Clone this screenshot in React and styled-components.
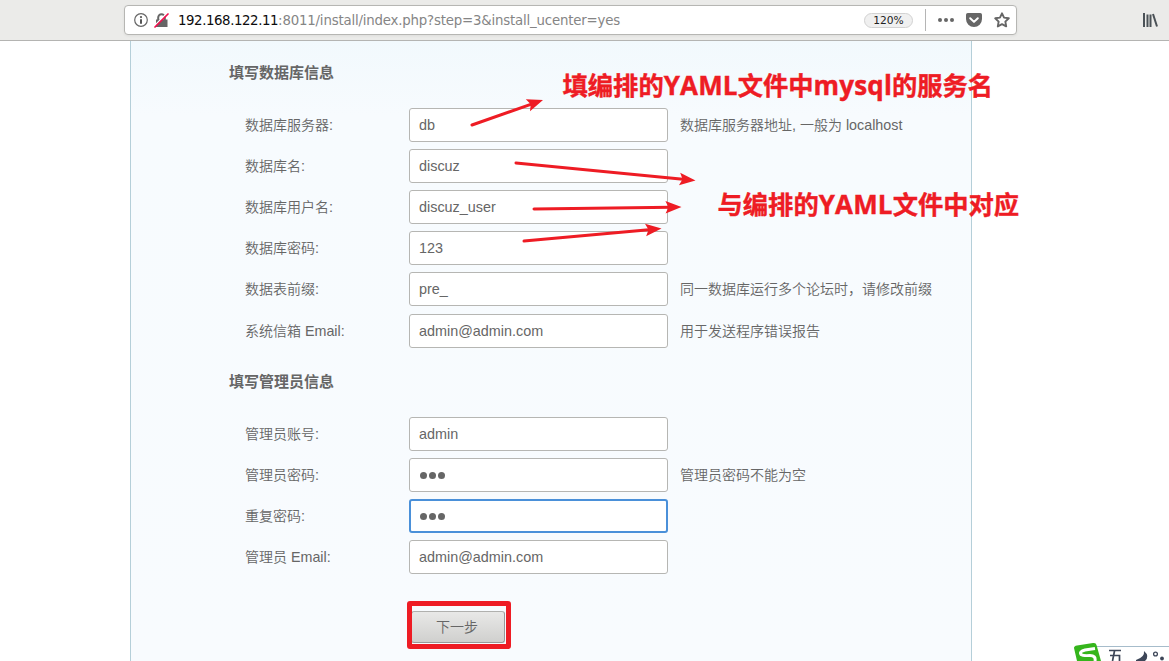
import React from "react";
import styled, { createGlobalStyle } from "styled-components";

const GlobalStyle = createGlobalStyle`
  * { box-sizing: border-box; }
  body {
    margin: 0;
    background: #fff;
    overflow: hidden;
    font-family: "Liberation Sans", "Noto Sans CJK SC", sans-serif;
    color: #666;
  }
`;

const Page = styled.div`
  position: relative;
  width: 1169px;
  height: 661px;
  overflow: hidden;
  display: flex;
  flex-direction: column;
`;

const Toolbar = styled.header`
  flex: none;
  height: 41px;
  padding: 5px 11px 0 124px;
  display: flex;
  align-items: flex-start;
  justify-content: space-between;
  background: #ebebe9;
  border-bottom: 1px solid #b4b4b2;
`;

const AddressBar = styled.div`
  width: 893px;
  height: 30px;
  padding: 0 6px 0 9px;
  display: flex;
  align-items: center;
  background: #fff;
  border: 1px solid #b6b6b3;
  border-radius: 4px;
  box-shadow: 0 1px 3px rgba(0, 0, 0, 0.06);
`;

const Url = styled.div`
  flex: 1;
  margin-left: 9px;
  padding-top: 1px;
  font-family: "DejaVu Sans", sans-serif;
  font-size: 13.33px;
  letter-spacing: -0.19px;
  line-height: 20px;
  white-space: nowrap;
  color: #858585;
`;

const Host = styled.span`
  color: #0c0c0d;
  letter-spacing: -0.42px;
`;

const Zoom = styled.div`
  width: 49px;
  height: 15px;
  border: 1px solid #d2d2d2;
  border-radius: 8px;
  background: #f0f0f0;
  color: #222;
  font-family: "DejaVu Sans", sans-serif;
  font-size: 10.7px;
  line-height: 13px;
  text-align: center;
`;

const Divider = styled.div`
  width: 1px;
  height: 22px;
  margin: 0 12px;
  background: #b5b5b5;
`;

const Actions = styled.div`
  display: flex;
  align-items: center;
  gap: 12px;
`;

const Icon = styled.svg`
  display: block;
  flex: none;
  margin-left: ${(p) => p.$left || 0}px;
  margin-top: ${(p) => p.$top || 0}px;
`;

const Panel = styled.main`
  flex: 1;
  width: 842px;
  margin-left: 130px;
  padding: 21px 0 0 98px;
  border: solid #b5cfd9;
  border-width: 0 1px;
  background: linear-gradient(#f2f9fd 0, #f7fbfe 75px, #f8fbfe 100%);
`;

const Heading = styled.h2`
  margin: 0;
  height: 22px;
  font-size: 15px;
  line-height: 22px;
  font-weight: 700;
`;

const Fields = styled.div`
  display: flex;
  flex-direction: column;
  gap: 7px;
  padding: 24px 0 0 16px;
  margin-bottom: ${(p) => p.$after}px;
`;

const Row = styled.div`
  display: flex;
  align-items: center;
  height: 34px;
  margin-top: ${(p) => p.$extra || 0}px;
  font-size: 14.3px;
  line-height: 20px;
  white-space: nowrap;
`;

const Cjk = styled.span`
  font-size: 14px;
  font-weight: 350;
`;

const Label = styled.label`
  width: 164px;
`;

const Input = styled.input`
  width: 259px;
  height: 34px;
  padding: 0 9px;
  border: 1px solid #b6b6b3;
  border-radius: 3px;
  outline: none;
  background: #fff;
  color: #666;
  font-family: "Liberation Sans", sans-serif;
  font-size: 14.4px;
`;

const Secret = styled.div`
  display: flex;
  align-items: center;
  gap: 2px;
  width: 259px;
  height: 34px;
  padding: 1px 0 0 ${(p) => (p.$focused ? 9 : 10)}px;
  border: ${(p) => (p.$focused ? "2px solid #4a90d9" : "1px solid #b6b6b3")};
  border-radius: 3px;
  background: #fff;
`;

const Dot = styled.i`
  width: 7px;
  height: 7px;
  border-radius: 50%;
  background: #666;
`;

const Hint = styled.span`
  margin-left: 12px;
`;

const Submit = styled.button`
  display: block;
  width: 94px;
  height: 32px;
  margin-left: 182px;
  padding: 0 2px 2px 0;
  border: 1px solid;
  border-color: #b0b0ae #999 #999 #b0b0ae;
  border-radius: 3px;
  background: linear-gradient(#e8e8e7, #d0d0ce);
  color: #666;
  font-family: "Noto Sans CJK SC", sans-serif;
  font-weight: 350;
  font-size: 14px;
  line-height: 28px;
`;

const Highlight = styled.div`
  position: absolute;
  left: 407px;
  top: 601px;
  width: 104px;
  height: 48px;
  border: 5px solid #ee1c24;
  border-radius: 3px;
`;

const Arrows = styled.svg`
  position: absolute;
  left: 460px;
  top: 90px;
`;

const Note = styled.div`
  position: absolute;
  left: ${(p) => p.$x}px;
  top: ${(p) => p.$y}px;
  color: #ee1c24;
  font-family: "Open Sans", "Noto Sans CJK SC", sans-serif;
  font-size: 25.3px;
  font-weight: 700;
  line-height: 36px;
  white-space: nowrap;
  -webkit-text-stroke: 0.4px #ee1c24;
`;

const Latin = styled.span`
  font-size: 26px;
  line-height: 1;
  letter-spacing: 0.15px;
`;

const ImeBar = styled.div`
  position: absolute;
  left: 1073px;
  top: 642px;
  width: 96px;
  height: 19px;
  overflow: hidden;
`;

const CJK_RUN = /([\u3000-\u9fff\uff00-\uffef]+)/;

function Mixed({ text }) {
  return text
    .split(CJK_RUN)
    .map((part, i) => (i % 2 ? <Cjk key={i}>{part}</Cjk> : part));
}

const database = [
  { label: "数据库服务器:", value: "db", hint: "数据库服务器地址, 一般为 localhost" },
  { label: "数据库名:", value: "discuz" },
  { label: "数据库用户名:", value: "discuz_user" },
  { label: "数据库密码:", value: "123" },
  { label: "数据表前缀:", value: "pre_", hint: "同一数据库运行多个论坛时，请修改前缀" },
  { label: "系统信箱 Email:", value: "admin@admin.com", hint: "用于发送程序错误报告", extra: 1 },
];

const admin = [
  { label: "管理员账号:", value: "admin" },
  { label: "管理员密码:", secret: true, hint: "管理员密码不能为空" },
  { label: "重复密码:", secret: true, focused: true },
  { label: "管理员 Email:", value: "admin@admin.com" },
];

function Field({ label, value, hint, secret, focused, extra }) {
  return (
    <Row $extra={extra}>
      <Label><Mixed text={label} /></Label>
      {secret ? (
        <Secret $focused={focused}><Dot /><Dot /><Dot /></Secret>
      ) : (
        <Input defaultValue={value} spellCheck={false} />
      )}
      {hint && <Hint><Mixed text={hint} /></Hint>}
    </Row>
  );
}

function Arrow({ x1, y1, x2, y2 }) {
  const angle = (Math.atan2(y2 - y1, x2 - x1) * 180) / Math.PI;
  const length = Math.hypot(x2 - x1, y2 - y1);
  return (
    <g transform={`translate(${x1} ${y1}) rotate(${angle})`}>
      <path d={`M0 0H${length - 10}`} stroke="#ee1c24" strokeWidth="3" strokeLinecap="round" />
      <path d={`M${length} 0l-16 -6.300 3 6.300 -3 6.300z`} fill="#ee1c24" />
    </g>
  );
}

export default function App() {
  return (
    <Page>
      <GlobalStyle />
      <Toolbar>
        <AddressBar>
          <Icon width="14" height="14" viewBox="0 0 14 14">
            <circle cx="7" cy="7" r="6.3" fill="none" stroke="#666" strokeWidth="1.2" />
            <circle cx="7" cy="4.1" r="1.1" fill="#555" />
            <path d="M6 6.2h2v4.5H6z" fill="#555" />
          </Icon>
          <Icon $left={6} width="15" height="15" viewBox="0 0 15 15">
            <path d="M4.200 7V4.500a3.300 3.300 0 0 1 6.600 0V7" fill="none" stroke="#666" strokeWidth="2" />
            <path d="M2 6.500h11.500v7.500H2z" fill="#666" />
            <path d="M.2 13L13 .2" stroke="#fff" strokeWidth="1.500" />
            <path d="M1 14L14 1" stroke="#f3104e" strokeWidth="1.7" strokeLinecap="round" />
          </Icon>
          <Url>
            <Host>192.168.122.11</Host>:8011/install/index.php?step=3&amp;install_ucenter=yes
          </Url>
          <Zoom>120%</Zoom>
          <Divider />
          <Actions>
            <Icon width="16" height="16" viewBox="0 0 16 16" fill="#666">
              <circle cx="2" cy="8" r="2" />
              <circle cx="8" cy="8" r="2" />
              <circle cx="14" cy="8" r="2" />
            </Icon>
            <Icon width="16" height="16" viewBox="0 0 16 16">
              <path d="M1.8 1h12.4A1.8 1.8 0 0 1 16 2.800V7A8 8 0 0 1 0 7V2.800A1.800 1.800 0 0 1 1.800 1z" fill="#666" />
              <path d="M4.200 6.200L8 9.900l3.800-3.700" fill="none" stroke="#fff" strokeWidth="2" strokeLinecap="round" strokeLinejoin="round" />
            </Icon>
            <Icon width="16" height="16" viewBox="0 0 16 16">
              <path d="M8 1.300l2.050 4.350 4.750.65-3.450 3.350.85 4.750L8 12.100l-4.200 2.300.85-4.750L1.200 6.300l4.750-.65z" fill="none" stroke="#666" strokeWidth="1.900" strokeLinejoin="round" />
            </Icon>
          </Actions>
        </AddressBar>
        <Icon $top={8} width="16" height="14" viewBox="0 0 16 14" fill="none" stroke="#4b5257" strokeWidth="2">
          <path d="M2 0v14M5.500 1.500V14M8.500 1.500V14M11 1L15 13.500" />
        </Icon>
      </Toolbar>
      <Panel>
        <Heading>填写数据库信息</Heading>
        <Fields $after={23}>
          {database.map((field) => <Field key={field.label} {...field} />)}
        </Fields>
        <Heading>填写管理员信息</Heading>
        <Fields $after={37}>
          {admin.map((field) => <Field key={field.label} {...field} />)}
        </Fields>
        <Submit>下一步</Submit>
      </Panel>
      <Arrows width="250" height="160">
        <Arrow x1={12} y1={35} x2={83} y2={10} />
        <Arrow x1={56} y1={73} x2={235.500} y2={90.500} />
        <Arrow x1={74} y1={119} x2={221.500} y2={117} />
        <Arrow x1={64} y1={151} x2={201.500} y2={138.500} />
      </Arrows>
      <Note $x={562.5} $y={67}>
        填编排的<Latin>YAML</Latin>文件中<Latin>mysql</Latin>的服务名
      </Note>
      <Note $x={717.5} $y={186}>
        与编排的<Latin>YAML</Latin>文件中对应
      </Note>
      <Highlight />
      <ImeBar>
        <svg width="96" height="19" viewBox="0 0 96 19">
          <path d="M20 4.500H96V19H20z" fill="#fff" />
          <path d="M20 4.500H96" stroke="#a6bccb" />
          <path d="M1 6Q1 4 4 3.500L20 1Q23 .500 23.500 3L28 19H4z" fill="#35b51c" />
          <path d="M22 6.500L12 8Q6 9.500 8 12.500Q10 14 17 13.500Q23 13.500 22 19" fill="none" stroke="#fff" strokeWidth="3" />
          <path d="M36 8.500H48M41.500 9L39.500 19M37 13.500H46.500V19" fill="none" stroke="#3d4658" strokeWidth="1.700" />
          <path d="M71 9Q72 15 63 18V19H72Q77 14 71 9z" fill="#3d4658" />
          <circle cx="82.500" cy="12" r="1.900" fill="none" stroke="#3d4658" strokeWidth="1.300" />
          <circle cx="89" cy="16.500" r="1.900" fill="#3d4658" />
        </svg>
      </ImeBar>
    </Page>
  );
}
